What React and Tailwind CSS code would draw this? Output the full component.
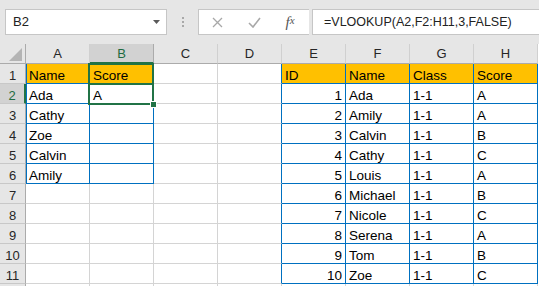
import React from 'react';

const COLS = ['A', 'B', 'C', 'D', 'E', 'F', 'G', 'H'];

const names = ['Ada', 'Amily', 'Calvin', 'Cathy', 'Louis', 'Michael', 'Nicole', 'Serena', 'Tom', 'Zoe'];
const scores = ['A', 'A', 'B', 'C', 'A', 'B', 'C', 'A', 'B', 'C'];
const left = { 1: ['Name', 'Score'], 2: ['Ada', 'A'], 3: ['Cathy', ''], 4: ['Zoe', ''], 5: ['Calvin', ''], 6: ['Amily', ''] };

// build the sheet: 12 rows x 8 columns (row 12 only peeks in at the bottom)
const sheet = Array.from({ length: 12 }, (_, i) => {
  const r = i + 1;
  const row = Array(8).fill('');
  if (left[r]) {
    row[0] = left[r][0];
    row[1] = left[r][1];
  }
  if (r === 1) {
    row[4] = 'ID';
    row[5] = 'Name';
    row[6] = 'Class';
    row[7] = 'Score';
  } else if (r <= 11) {
    row[4] = String(r - 1);
    row[5] = names[r - 2];
    row[6] = '1-1';
    row[7] = scores[r - 2];
  }
  return row;
});

const Cell = ({ r, c, value }) => {
  const inL = c <= 1 && r >= 1 && r <= 6;
  const inR = c >= 4 && r >= 1 && r <= 11;
  const inT = inL || inR;
  const rightBlue = inT || (c === 3 && r >= 1 && r <= 11);
  const yellow = r === 1 && inT;
  const numeric = c === 4 && r >= 2;

  return (
    <div
      className={`h-5 border-r border-b overflow-hidden whitespace-nowrap text-[13.5px] leading-[19px] pt-[2px] text-black ${
        rightBlue ? 'border-r-[#0070c0]' : 'border-r-[#d4d4d4]'
      } ${inT ? 'border-b-[#0070c0]' : 'border-b-[#d4d4d4]'} ${
        inL && c === 0 ? 'border-l border-l-[#0070c0] pl-[2px]' : 'pl-[3px]'
      } ${yellow ? 'bg-[#ffc000]' : 'bg-white'} ${numeric ? 'text-right pr-[3px]' : ''}`}
    >
      {value}
    </div>
  );
};

export default function App() {
  return (
    <div className="w-[539px] h-[286px] overflow-hidden bg-white font-['Liberation_Sans',Arial,sans-serif]">
      {/* formula bar */}
      <div className="h-[44px] bg-[#e6e6e6] flex items-start pt-[9px] pl-[5px]">
        <div className="w-[162px] h-[26px] bg-white border border-[#c6c6c6] flex items-center justify-between pl-[7px] pr-[6px]">
          <span className="text-[13px] text-[#222]">B2</span>
          <svg width="7" height="4" viewBox="0 0 7 4">
            <path d="M0 0h7L3.5 4z" fill="#5a5a5a" />
          </svg>
        </div>
        <div className="w-[31px] h-[26px] flex flex-col items-center justify-center gap-[2px]">
          <div className="w-[2px] h-[2px] bg-[#a8a8a8]" />
          <div className="w-[2px] h-[2px] bg-[#a8a8a8]" />
          <div className="w-[2px] h-[2px] bg-[#a8a8a8]" />
        </div>
        <div className="w-[111px] h-[26px] bg-white border border-[#c6c6c6] border-r-0 flex items-center">
          <div className="w-[37px] flex justify-center">
            <svg width="11" height="11" viewBox="0 0 11 11">
              <path d="M1 1l9 9M10 1l-9 9" stroke="#a8a8a8" strokeWidth="1.3" />
            </svg>
          </div>
          <div className="w-[36px] flex justify-center">
            <svg width="13" height="11" viewBox="0 0 13 11">
              <path d="M1 6l4 4 7-9" stroke="#a8a8a8" strokeWidth="1.6" fill="none" />
            </svg>
          </div>
          <div className="w-[36px] flex justify-center font-['Liberation_Serif',serif] italic text-[15px] text-[#555] leading-none">
            f<span className="text-[11px]">x</span>
          </div>
        </div>
        <div className="w-[3px]" />
        <div className="flex-1 h-[26px] bg-white border border-[#c6c6c6] border-r-0 flex items-center pl-[11px]">
          <span className="text-[12.5px] text-[#222] whitespace-nowrap">=VLOOKUP(A2,F2:H11,3,FALSE)</span>
        </div>
      </div>

      {/* grid */}
      <div className="relative grid grid-cols-[26px_repeat(8,64px)] auto-rows-[20px]">
        <div className="h-5 bg-[#e6e6e6] border-r border-b border-r-[#ababab] border-b-[#ababab] flex items-end justify-end pr-[3px] pb-[2px]">
          <svg width="13" height="13" viewBox="0 0 13 13">
            <path d="M13 0v13H0z" fill="#b4b4b4" />
          </svg>
        </div>
        {COLS.map((col) =>
          col === 'B' ? (
            <div key={col} className="h-5 bg-[#d2d2d2] border-r border-r-[#ababab] border-b-2 border-b-[#217346] text-center text-[13px] leading-[19px] text-[#1e6b41]">
              {col}
            </div>
          ) : (
            <div key={col} className="h-5 bg-[#e6e6e6] border-r border-r-[#d0d0d0] border-b border-b-[#ababab] text-center text-[13px] leading-[19px] text-[#262626]">
              {col}
            </div>
          )
        )}

        {sheet.map((row, i) => {
          const r = i + 1;
          return (
            <React.Fragment key={r}>
              {r === 2 ? (
                <div className="h-5 bg-[#d2d2d2] border-b border-b-[#c8c8c8] border-r-2 border-r-[#217346] text-center text-[13px] leading-[19px] pt-[2px] text-[#1e6b41]">
                  {r}
                </div>
              ) : (
                <div className="h-5 bg-[#e6e6e6] border-b border-b-[#c8c8c8] border-r border-r-[#ababab] text-center text-[13px] leading-[19px] pt-[2px] text-[#262626]">
                  {r <= 11 ? r : ''}
                </div>
              )}
              {row.map((v, c) => (
                <Cell key={c} r={r} c={c} value={v} />
              ))}
            </React.Fragment>
          );
        })}

        {/* active cell selection */}
        <div className="absolute left-[88px] top-[19px] w-[66px] h-[42px] border-2 border-[#217346] pointer-events-none" />
        <div className="absolute left-[88px] top-[39px] w-[66px] h-[22px] border-2 border-[#217346] pointer-events-none" />
        <div className="absolute left-[150px] top-[57px] w-[7px] h-[7px] bg-[#217346] border border-white" />
      </div>
    </div>
  );
}
